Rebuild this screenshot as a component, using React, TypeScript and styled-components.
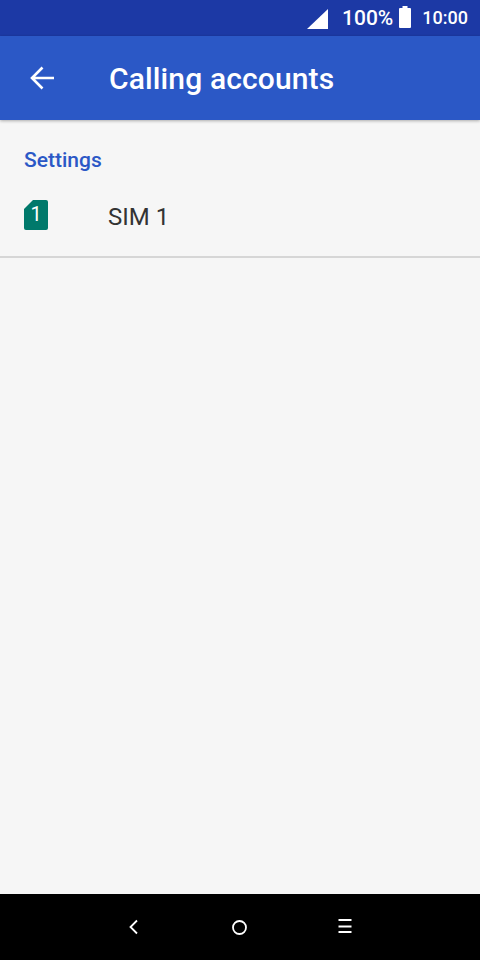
import React from 'react';
import styled, { createGlobalStyle } from 'styled-components';

const GlobalStyle = createGlobalStyle`
  html, body {
    margin: 0;
    padding: 0;
    background: #f6f6f6;
  }
  * {
    box-sizing: border-box;
  }
`;

const Screen = styled.div`
  width: 480px;
  height: 960px;
  display: flex;
  flex-direction: column;
  background: #f6f6f6;
  font-family: Roboto, "Liberation Sans", sans-serif;
  overflow: hidden;
`;

const StatusBar = styled.div`
  height: 36px;
  flex: none;
  display: flex;
  align-items: center;
  justify-content: flex-end;
  padding-right: 12px;
  background: #1c39a5;
  color: #fff;
  font-weight: 500;
`;

const SignalIcon = styled.svg`
  width: 22px;
  height: 22px;
  margin-right: 13px;
`;

const Battery = styled.svg`
  width: 12px;
  height: 22px;
  margin: -2px 11px 0 6px;
`;

const StatusText = styled.span<{ $size: number }>`
  font-size: ${({ $size }) => $size}px;
  line-height: 36px;
`;

const AppBar = styled.header`
  height: 84px;
  flex: none;
  display: flex;
  align-items: center;
  padding-left: 30px;
  background: #2b58c6;
  box-shadow: 0 1px 3px rgba(0, 0, 0, 0.3);
  position: relative;
`;

const BackIcon = styled.svg`
  width: 24px;
  height: 24px;
  margin-top: -1px;
  margin-right: 55px;
`;

const Title = styled.h1`
  margin: 0;
  color: #fff;
  font-size: 30px;
  font-weight: 500;
  letter-spacing: 0.13px;
`;

const SectionTitle = styled.div`
  padding: 28px 0 0 24px;
  height: 60px;
  color: #2b58c6;
  font-size: 21px;
  font-weight: 500;
  line-height: 24px;
`;

const AccountRow = styled.div`
  height: 78px;
  flex: none;
  display: flex;
  align-items: flex-start;
  padding: 20px 0 0 24px;
  border-bottom: 2px solid #d6d6d6;
`;

const SimBadge = styled.div`
  width: 24px;
  height: 30px;
  flex: none;
  display: flex;
  align-items: center;
  justify-content: center;
  padding-bottom: 3px;
  background: #00796b;
  border-radius: 2px;
  clip-path: polygon(9px 0, 100% 0, 100% 100%, 0 100%, 0 9px);
  color: #fff;
  font-size: 20px;
`;

const AccountName = styled.span`
  margin-left: 60px;
  color: #333;
  font-size: 24px;
  line-height: 34px;
`;

const Spacer = styled.main`
  flex: 1;
`;

const NavBar = styled.nav`
  height: 66px;
  flex: none;
  display: flex;
  align-items: center;
  background: #000;
  padding: 0 0 0 126px;
`;

const NavIcon = styled.svg<{ $gap?: number }>`
  width: 16px;
  height: 18px;
  margin-right: ${({ $gap }) => $gap ?? 0}px;
`;

export default function App() {
  return (
    <>
      <GlobalStyle />
      <Screen>
        <StatusBar>
          <SignalIcon viewBox="0 0 22 22">
            <path d="M21 2V22H0Z" fill="#fff" />
          </SignalIcon>
          <StatusText $size={21}>100%</StatusText>
          <Battery viewBox="0 0 12 22">
            <path d="M3.5 0H8.5V2H11A1 1 0 0 1 12 3V21A1 1 0 0 1 11 22H1A1 1 0 0 1 0 21V3A1 1 0 0 1 1 2H3.5Z" fill="#fff" />
          </Battery>
          <StatusText $size={18}>10:00</StatusText>
        </StatusBar>
        <AppBar>
          <BackIcon viewBox="0 0 24 24" fill="none" stroke="#fff" strokeWidth="2.6">
            <path d="M24 12H2M12.5 1.5L2 12L12.5 22.5" />
          </BackIcon>
          <Title>Calling accounts</Title>
        </AppBar>
        <SectionTitle>Settings</SectionTitle>
        <AccountRow>
          <SimBadge>1</SimBadge>
          <AccountName>SIM 1</AccountName>
        </AccountRow>
        <Spacer />
        <NavBar>
          <NavIcon $gap={90} viewBox="0 0 16 18" fill="none" stroke="#fff" strokeWidth="1.8">
            <path d="M11 2.5L4.5 9L11 15.5" />
          </NavIcon>
          <NavIcon $gap={90} viewBox="0 0 16 18" fill="none" stroke="#fff" strokeWidth="1.8">
            <circle cx="7.5" cy="9.5" r="6.5" />
          </NavIcon>
          <NavIcon viewBox="0 0 16 18" fill="none" stroke="#fff" strokeWidth="1.8">
            <path d="M0.5 2H13.5M0.5 8.5H13.5M0.5 14H13.5" />
          </NavIcon>
        </NavBar>
      </Screen>
    </>
  );
}
